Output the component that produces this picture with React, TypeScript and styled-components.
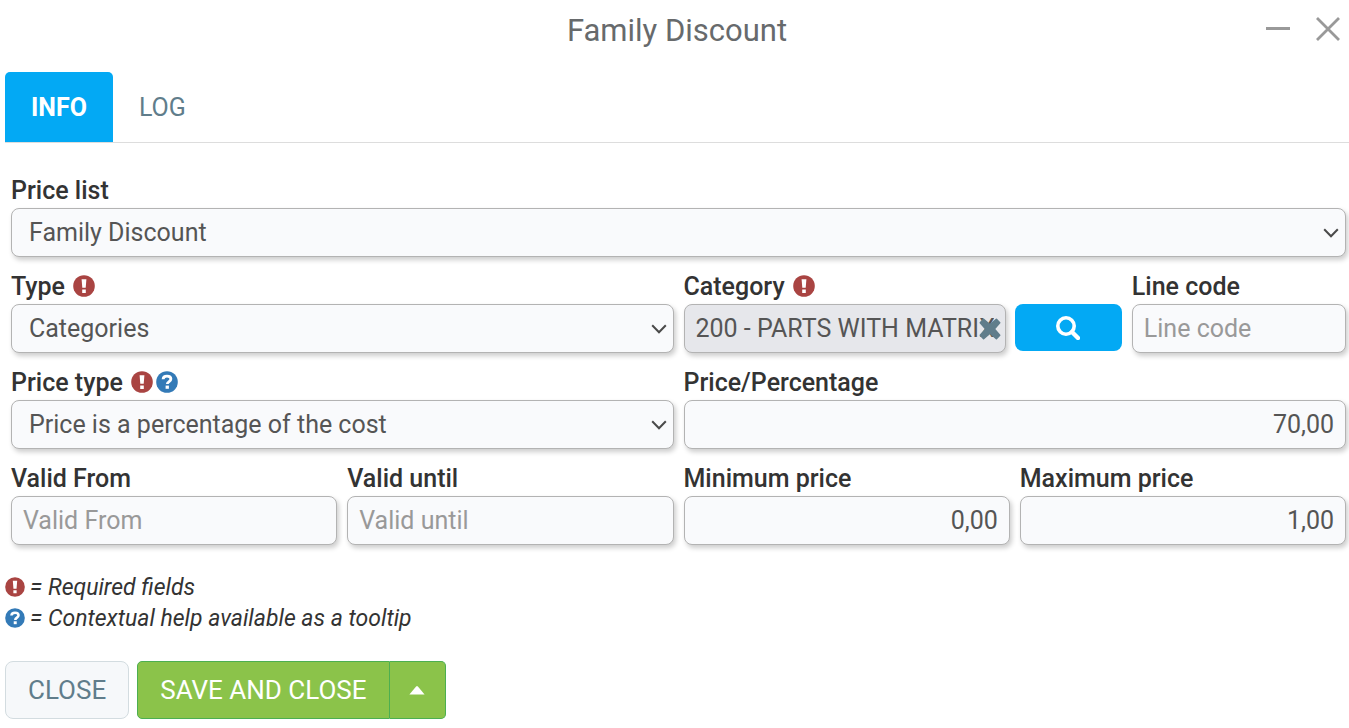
import React, { useId, useState } from 'react';
import styled, { createGlobalStyle, css } from 'styled-components';

const GlobalStyle = createGlobalStyle`
  *, *::before, *::after { box-sizing: border-box; }
  body {
    margin: 0;
    background: #fff;
    color: #333;
    font-family: Roboto, "Liberation Sans", sans-serif;
    font-size: 25px;
    line-height: 36px;
  }
  button, input, select { font: inherit; margin: 0; }
`;

const Dialog = styled.main`
  padding-left: 5px;
`;

const Header = styled.header`
  display: grid;
  grid-template-columns: 1fr auto 1fr;
  align-items: center;
  height: 62px;
`;

const Title = styled.h1`
  grid-column: 2;
  margin: 0;
  font-size: 31px;
  font-weight: 400;
  color: #676a6c;
`;

const WindowControls = styled.div`
  display: flex;
  justify-content: flex-end;
  gap: 16px;
  padding: 0 4px 4px 0;
`;

const IconButton = styled.button`
  display: flex;
  align-items: center;
  justify-content: center;
  width: 34px;
  height: 34px;
  padding: 0;
  border: 0;
  background: none;
  color: #999;
  cursor: pointer;
`;

const Tabs = styled.nav`
  display: flex;
  margin-top: 10px;
  border-bottom: 1px solid #ddd;
`;

const Tab = styled.button<{ $active?: boolean }>`
  height: 70px;
  padding: 1px 26px 0;
  border: 0;
  border-radius: 5px 5px 0 0;
  background: ${p => (p.$active ? '#03a9f4' : 'transparent')};
  color: ${p => (p.$active ? '#fff' : '#607d8b')};
  font-weight: ${p => (p.$active ? 700 : 400)};
  cursor: pointer;
`;

const Form = styled.form`
  margin: 0;
`;

const Fields = styled.div`
  display: grid;
  grid-template-columns: repeat(12, minmax(0, 1fr));
  gap: 11px 10px;
  padding: 29px 3px 0 6px;
`;

const FieldCell = styled.div<{ $span: number }>`
  grid-column: span ${p => p.$span};
`;

const LabelRow = styled.div`
  display: flex;
  align-items: center;
  gap: 8px;
  height: 36px;
`;

const Label = styled.label`
  padding-top: 2px;
  font-weight: 500;
  white-space: nowrap;
`;

const Marks = styled.span`
  display: flex;
  gap: 3px;
`;

const ControlWrap = styled.div`
  position: relative;
  min-width: 0;
  flex: 3;
`;

const controlBox = css`
  display: block;
  width: 100%;
  height: 49px;
  border: 1px solid #b3b3b3;
  border-radius: 8px;
  background: #f9fafc;
  color: #555;
  box-shadow: 2px 3px 5px rgba(0, 0, 0, 0.2);
  outline: none;
`;

const Input = styled.input<{ $numeric?: boolean }>`
  ${controlBox}
  padding: 0 11px;
  text-align: ${p => (p.$numeric ? 'right' : 'left')};
  &::placeholder { color: #999; opacity: 1; }
  &:read-only { background: #e6e7eb; }
`;

const Select = styled.select`
  ${controlBox}
  appearance: none;
  padding: 0 40px 0 17px;
`;

const SelectArrow = styled.svg`
  position: absolute;
  top: 19px;
  right: 7px;
  pointer-events: none;
`;

const ClearButton = styled.button`
  position: absolute;
  top: 14px;
  right: 5px;
  display: flex;
  padding: 0;
  border: 0;
  background: none;
  color: #607d8b;
  cursor: pointer;
`;

const LookupGroup = styled.div`
  display: flex;
  gap: 9px;
`;

const SearchButton = styled.button`
  display: flex;
  flex: 1;
  align-items: center;
  justify-content: center;
  height: 47px;
  padding: 0;
  border: 0;
  border-radius: 8px;
  background: #03a9f4;
  color: #fff;
  cursor: pointer;
`;

const Legend = styled.div`
  padding-top: 27px;
  font-size: 23px;
  font-style: italic;
  line-height: 31px;
`;

const LegendLine = styled.p`
  display: flex;
  align-items: center;
  gap: 5px;
  margin: 0;

  svg { margin-bottom: 2px; }
`;

const Footer = styled.footer`
  display: flex;
  gap: 8px;
  padding: 27px 0 9px;
`;

const Button = styled.button`
  height: 58px;
  padding: 0 22px;
  border: 1px solid #d3dce0;
  border-radius: 8px;
  background: #f6f8fa;
  color: #607d8b;
  font-size: 26px;
  cursor: pointer;
`;

const ButtonGroup = styled.div`
  display: flex;
`;

const SaveButton = styled(Button)`
  border-color: #4caf50;
  border-radius: 5px 0 0 5px;
  background: #8bc34a;
  color: #fff;
`;

const MoreButton = styled(SaveButton)`
  display: flex;
  align-items: center;
  justify-content: center;
  width: 56px;
  padding: 0;
  border-left: 0;
  border-radius: 0 5px 5px 0;
`;

const RequiredIcon = ({ size = 22 }: { size?: number }) => (
  <svg width={size} height={size} viewBox="0 0 22 22" role="img" aria-label="Required">
    <circle cx="11" cy="11" r="10.8" fill="#a94442" />
    <path d="M8.6 4.2h4.8l-.7 8.6H9.3zM9.2 14.6h3.6v3.3H9.2z" fill="#fff" />
  </svg>
);

const HelpIcon = ({ size = 22 }: { size?: number }) => (
  <svg width={size} height={size} viewBox="0 0 22 22" role="img" aria-label="Help">
    <circle cx="11" cy="11" r="10.8" fill="#337ab7" />
    <path d="M7.1 8.3C7.2 5.9 8.8 5.2 11 5.2s3.9.9 3.9 2.9c0 2.5-3.6 2.4-3.6 5" fill="none" stroke="#fff" strokeWidth="2.8" />
    <path d="M9.6 14.6h3.3v3.2H9.6z" fill="#fff" />
  </svg>
);

type FieldProps = {
  label: string;
  span: number;
  marks?: React.ReactNode;
  children: (id: string) => React.ReactNode;
};

function Field({ label, span, marks, children }: FieldProps) {
  const id = useId();
  return (
    <FieldCell $span={span}>
      <LabelRow>
        <Label htmlFor={id}>{label}</Label>
        {marks && <Marks>{marks}</Marks>}
      </LabelRow>
      {children(id)}
    </FieldCell>
  );
}

function Dropdown({ id, options }: { id: string; options: string[] }) {
  return (
    <ControlWrap>
      <Select id={id}>
        {options.map(o => <option key={o}>{o}</option>)}
      </Select>
      <SelectArrow width="16" height="12" viewBox="0 0 16 12" fill="none" aria-hidden="true">
        <path d="M1.2 2.2 8 9.2l6.8-7" stroke="#4a4a4a" strokeWidth="2" />
      </SelectArrow>
    </ControlWrap>
  );
}

export default function App() {
  const [tab, setTab] = useState('INFO');
  const [category, setCategory] = useState('200 - PARTS WITH MATRIX');

  return (
    <Dialog>
      <GlobalStyle />
      <Header>
        <Title>Family Discount</Title>
        <WindowControls>
          <IconButton type="button" aria-label="Minimize">
            <svg width="26" height="26" viewBox="0 0 26 26"><path d="M1 12.5h24" stroke="currentColor" strokeWidth="3" /></svg>
          </IconButton>
          <IconButton type="button" aria-label="Close window">
            <svg width="26" height="26" viewBox="0 0 26 26"><path d="M2 2l22 22M24 2 2 24" stroke="currentColor" strokeWidth="2.8" /></svg>
          </IconButton>
        </WindowControls>
      </Header>

      <Tabs role="tablist">
        {['INFO', 'LOG'].map(name => (
          <Tab key={name} type="button" role="tab" aria-selected={tab === name} $active={tab === name} onClick={() => setTab(name)}>
            {name}
          </Tab>
        ))}
      </Tabs>

      <Form onSubmit={e => e.preventDefault()}>
        <Fields>
          <Field label="Price list" span={12}>
            {id => <Dropdown id={id} options={['Family Discount']} />}
          </Field>

          <Field label="Type" span={6} marks={<RequiredIcon />}>
            {id => <Dropdown id={id} options={['Categories']} />}
          </Field>
          <Field label="Category" span={4} marks={<RequiredIcon />}>
            {id => (
              <LookupGroup>
                <ControlWrap>
                  <Input id={id} value={category} readOnly />
                  <ClearButton type="button" aria-label="Clear category" onClick={() => setCategory('')}>
                    <svg width="22" height="22" viewBox="0 0 22 22" aria-hidden="true">
                      <path
                        d="M4.6 1.4 11 6.9l6.4-5.5 3.3 3.3L15.3 11l5.4 6.3-3.3 3.3L11 15.1l-6.4 5.5-3.3-3.3L6.7 11 1.3 4.7z"
                        fill="currentColor"
                        stroke="currentColor"
                        strokeWidth="1.6"
                        strokeLinejoin="round"
                      />
                    </svg>
                  </ClearButton>
                </ControlWrap>
                <SearchButton type="button" aria-label="Search category">
                  <svg width="24" height="24" viewBox="0 0 24 24" fill="none" stroke="currentColor" aria-hidden="true">
                    <circle cx="10" cy="10" r="8.2" strokeWidth="3.6" />
                    <path d="m16 16 6 6" strokeWidth="4.4" strokeLinecap="round" />
                  </svg>
                </SearchButton>
              </LookupGroup>
            )}
          </Field>
          <Field label="Line code" span={2}>
            {id => <Input id={id} placeholder="Line code" />}
          </Field>

          <Field label="Price type" span={6} marks={<><RequiredIcon /><HelpIcon /></>}>
            {id => <Dropdown id={id} options={['Price is a percentage of the cost']} />}
          </Field>
          <Field label="Price/Percentage" span={6}>
            {id => <Input id={id} $numeric defaultValue="70,00" />}
          </Field>

          <Field label="Valid From" span={3}>
            {id => <Input id={id} placeholder="Valid From" />}
          </Field>
          <Field label="Valid until" span={3}>
            {id => <Input id={id} placeholder="Valid until" />}
          </Field>
          <Field label="Minimum price" span={3}>
            {id => <Input id={id} $numeric defaultValue="0,00" />}
          </Field>
          <Field label="Maximum price" span={3}>
            {id => <Input id={id} $numeric defaultValue="1,00" />}
          </Field>
        </Fields>

        <Legend>
          <LegendLine><RequiredIcon size={20} />= Required fields</LegendLine>
          <LegendLine><HelpIcon size={20} />= Contextual help available as a tooltip</LegendLine>
        </Legend>

        <Footer>
          <Button type="button">CLOSE</Button>
          <ButtonGroup>
            <SaveButton type="submit">SAVE AND CLOSE</SaveButton>
            <MoreButton type="button" aria-label="More save options">
              <svg width="16" height="10" viewBox="0 0 16 10" aria-hidden="true"><path d="M.4 9.4 7.3 1.2h1.4l6.9 8.2z" fill="currentColor" /></svg>
            </MoreButton>
          </ButtonGroup>
        </Footer>
      </Form>
    </Dialog>
  );
}
